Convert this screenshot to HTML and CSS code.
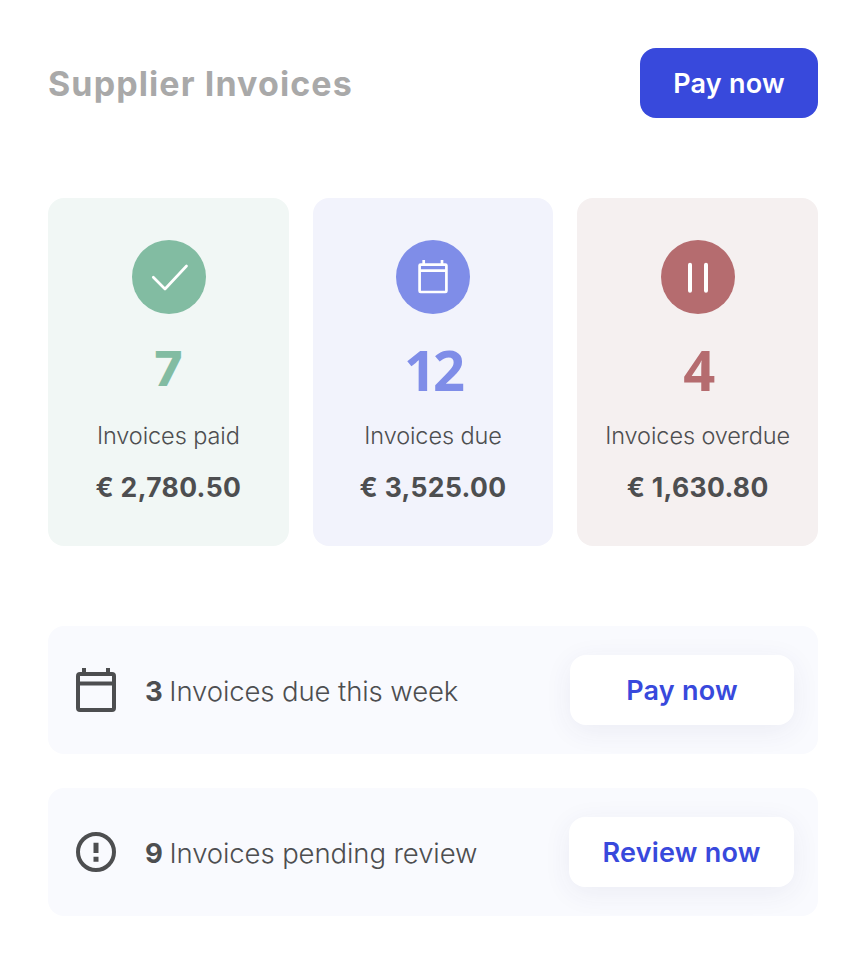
FILE: index.html
```html
<!DOCTYPE html>
<html lang="en">
<head>
<meta charset="utf-8">
<title>Supplier Invoices</title>
<link rel="stylesheet" href="styles.css">
</head>
<body>
<main class="page">
  <header class="header">
    <h1 class="title">Supplier Invoices</h1>
    <button class="btn btn-primary">Pay now</button>
  </header>
  <section class="cards">
    <article class="card card-green">
      <div class="badge">
        <svg width="40" height="40" viewBox="0 0 40 40" fill="none" stroke="#fff" stroke-width="2.7" stroke-linecap="round" stroke-linejoin="round"><path d="M4.300 20.300L16 32L37.500 9"/></svg>
      </div>
      <div class="count">7</div>
      <div class="label">Invoices paid</div>
      <div class="amount">€ 2,780.50</div>
    </article>
    <article class="card card-blue">
      <div class="badge">
        <svg width="40" height="40" viewBox="0 0 40 40" fill="none" stroke="#fff" stroke-width="2.700"><rect x="6.600" y="7.600" width="26.800" height="27.400" rx="1"/><path d="M6.600 13.700H33.400M10.700 3V7.600M29 3V7.600"/></svg>
      </div>
      <div class="count count-alt">12</div>
      <div class="label">Invoices due</div>
      <div class="amount">€ 3,525.00</div>
    </article>
    <article class="card card-red">
      <div class="badge">
        <svg width="40" height="40" viewBox="0 0 40 40" fill="none" stroke="#fff" stroke-width="4" stroke-linecap="round"><path d="M12 7.700V33.700M28 7.700V33.700"/></svg>
      </div>
      <div class="count count-alt">4</div>
      <div class="label">Invoices overdue</div>
      <div class="amount">€ 1,630.80</div>
    </article>
  </section>
  <section class="rows">
    <div class="row">
      <svg class="row-icon" width="40" height="44" viewBox="0 0 40 44" fill="none" stroke="#4d4e50" stroke-width="4"><rect x="2" y="6" width="36" height="36" rx="2"/><path d="M2 15.500H38M8 0V6M32 0V6"/></svg>
      <p class="row-text"><b>3</b> Invoices due this week</p>
      <button class="btn btn-white">Pay now</button>
    </div>
    <div class="row">
      <svg class="row-icon" width="40" height="40" viewBox="0 0 40 40" fill="none" stroke="#4d4e50" stroke-width="4"><circle cx="20" cy="20" r="18"/><path d="M20 10.700V21M20 24.700V29.700" stroke-width="5"/></svg>
      <p class="row-text"><b>9</b> Invoices pending review</p>
      <button class="btn btn-white">Review now</button>
    </div>
  </section>
</main>
</body>
</html>
```
FILE: styles.css
```css
* { box-sizing: border-box; }
html, body { margin: 0; background: #fff; }
body { font-family: "Inter", "Noto Sans", sans-serif; color: #4d4e50; }
.page { padding: 48px; }
.header { display: flex; justify-content: space-between; align-items: center; height: 70px; }
.title { margin: 0; font-size: 34px; font-weight: 700; color: #a9a9a9; letter-spacing: 1.1px; }
.btn { border: 0; font-family: inherit; font-size: 27px; font-weight: 600; height: 70px; border-radius: 16px; padding: 0; letter-spacing: 0.2px; }
.btn-primary { width: 178px; background: #3849dc; color: #fff; }
.btn-white { background: #fff; color: #3849dc; padding: 0 33.5px; min-width: 224px; box-shadow: 0 6px 28px rgba(50, 60, 120, 0.07); }
.cards { display: grid; grid-template-columns: repeat(3, 1fr); gap: 24px; margin-top: 80px; }
.card { height: 348px; border-radius: 16px; padding-top: 42px; display: flex; flex-direction: column; align-items: center; }
.card-green { background: #f1f7f5; --accent: #82bca2; }
.card-green .badge { margin-left: 1.300px; }
.card-blue { background: #f2f3fc; --accent: #7f8de8; }
.card-red { background: #f5f0f0; --accent: #b56c6f; }
.badge { width: 74px; height: 74px; border-radius: 50%; background: var(--accent); display: flex; align-items: center; justify-content: center; }
.count { font-weight: 800; font-size: 48px; line-height: 70px; margin-top: 20px; color: var(--accent); }
.count-alt { font-family: "Noto Sans", sans-serif; font-weight: 700; font-size: 56px; letter-spacing: -3px; }
.label { font-size: 23.5px; font-weight: 300; line-height: 32px; margin-top: 16px; letter-spacing: -0.1px; }
.amount { font-size: 26.5px; font-weight: 700; line-height: 36px; margin-top: 17px; letter-spacing: 0.35px; }
.rows { display: flex; flex-direction: column; gap: 34px; margin-top: 80px; }
.row { height: 128px; background: #f9fafe; border-radius: 16px; padding: 0 24px 0 28px; display: flex; align-items: center; gap: 30px; }
.row-icon { flex: none; }
.row-text { margin: 2px 0 0; flex: 1; font-size: 27.5px; font-weight: 300; letter-spacing: -0.1px; }
.row-text b { font-weight: 700; margin-left: -1px; margin-right: -1px; }
```
